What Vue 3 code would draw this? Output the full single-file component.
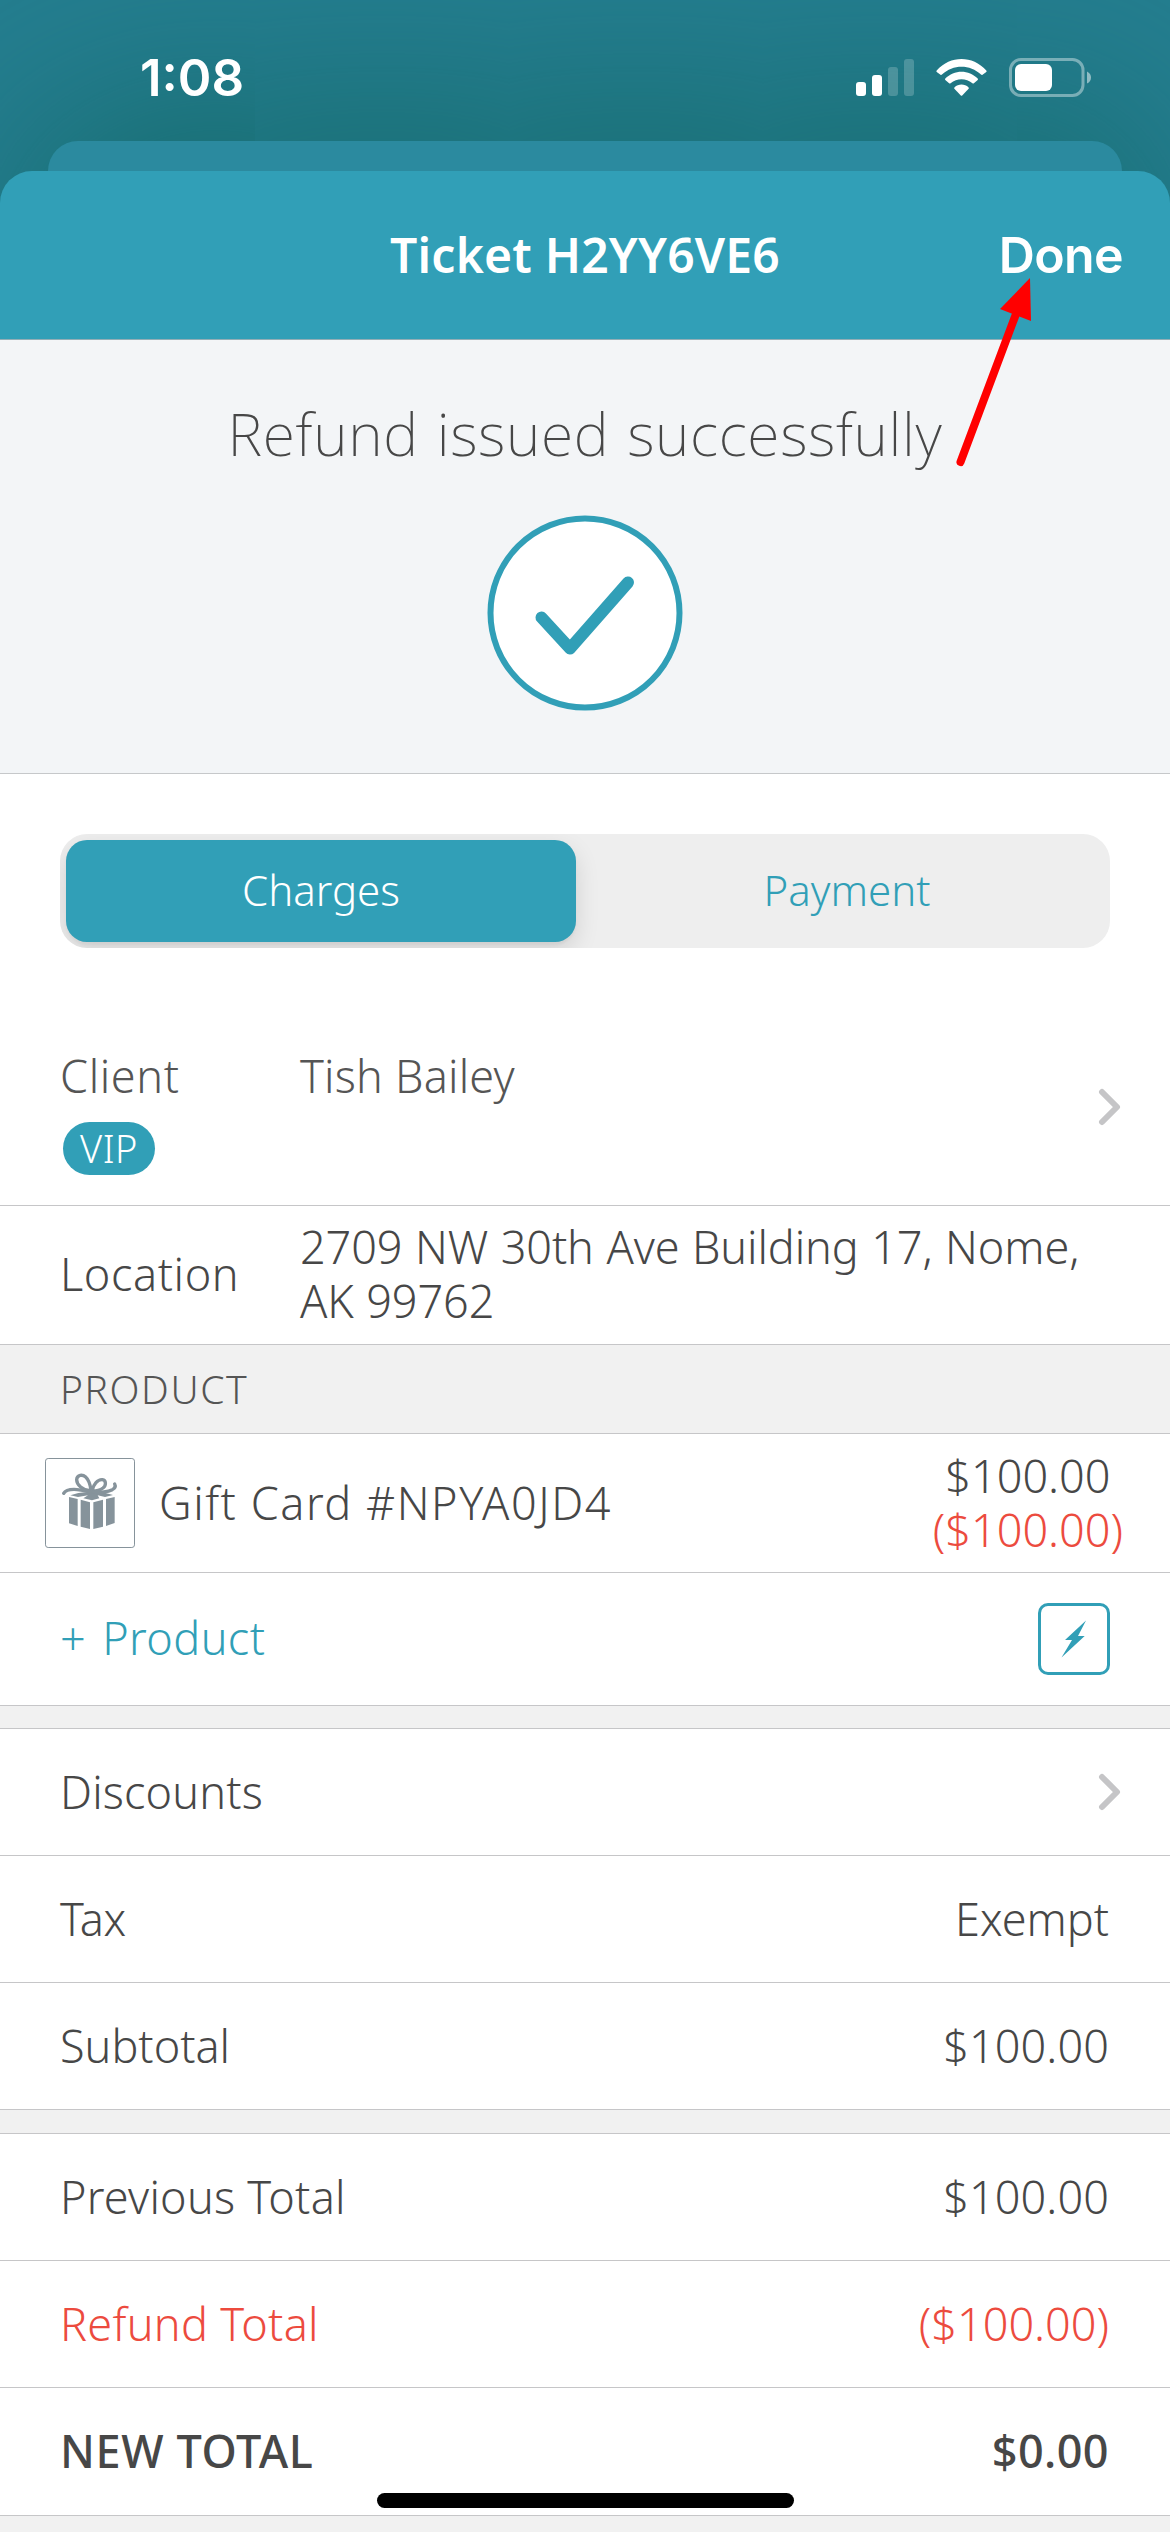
<script setup>
const summary = [
  { label: 'Discounts', ls: 0.15, chevron: true },
  { label: 'Tax', ls: -0.5, value: 'Exempt', vls: 0 },
  { label: 'Subtotal', ls: 0, value: '$100.00', vls: 0.1 },
]
const totals = [
  { label: 'Previous Total', ls: 0.25, value: '$100.00', vls: 0.1 },
  { label: 'Refund Total', ls: 0.3, value: '($100.00)', vls: 0, tone: 'red' },
  { label: 'NEW TOTAL', ls: 0.6, value: '$0.00', vls: 0.4, tone: 'strong' },
]
</script>

<template>
  <div class="screen">
    <div class="top">
      <div class="status">
        <span class="time">1:08</span>
        <svg class="indicators" width="240" height="44" viewBox="852 56 240 44">
          <g fill="#fff">
            <rect x="856" y="82" width="10" height="14" rx="3" />
            <rect x="872" y="75" width="10" height="21" rx="3" />
            <rect x="888" y="67" width="10" height="29" rx="3" opacity=".2" />
            <rect x="904" y="59" width="10" height="37" rx="3" opacity=".2" />
            <path d="M936.700 70.500C950.500 55.200 972.500 55.200 986.300 70.500Q987 71.300 986.300 72L982.500 74.800Q981.800 75.300 981 74.600C970 64.200 953 64.200 942 74.600Q941.200 75.300 940.500 74.800L936.700 72Q936 71.300 936.700 70.500Z" />
            <path d="M945.300 78.600C954 69.400 969 69.400 977.700 78.600Q978.300 79.300 977.700 80L973.900 83.300Q973.200 83.900 972.400 83.300C966 77.900 957 77.900 950.600 83.300Q949.800 83.900 949.100 83.300L945.300 80Q944.700 79.300 945.300 78.600Z" />
            <path d="M954.400 87.400C958.500 83.600 964.500 83.600 968.600 87.400Q969.200 88.100 968.600 88.800L962.200 95.500Q961.500 96.200 960.800 95.500L954.400 88.800Q953.800 88.100 954.400 87.400Z" />
            <rect x="1015" y="64" width="37" height="27" rx="6" />
            <path d="M1087 71.500Q1091 73.500 1091 77.500T1087 83.500Z" opacity=".5" />
          </g>
          <rect x="1010.500" y="59.500" width="72.500" height="36" rx="10.500" fill="none" stroke="#fff" stroke-width="3" opacity=".4" />
        </svg>
      </div>
      <div class="back-card"></div>
      <header class="header">
        <span></span>
        <h1>Ticket H2YY6VE6</h1>
        <span class="done">Done</span>
      </header>
    </div>

    <section class="result">
      <p>Refund issued successfully</p>
      <svg width="196" height="196" viewBox="0 0 196 196" fill="none" stroke="#319fb7">
        <circle cx="98" cy="98" r="94.500" stroke-width="6" fill="#fff" />
        <path d="M54.500 102.500 83 133.500 141 67.500" stroke-width="12" stroke-linecap="round" stroke-linejoin="round" />
      </svg>
    </section>

    <div class="tabs">
      <div class="segmented">
        <span class="tab active">Charges</span>
        <span class="tab pay">Payment</span>
      </div>
    </div>

    <div class="row client">
      <div class="label-col">
        <span class="name-label">Client</span>
        <span class="vip">VIP</span>
      </div>
      <span class="client-name">Tish Bailey</span>
      <svg class="chevron" width="24" height="38" viewBox="0 0 24 38"><path d="M4 4 19 19 4 34" /></svg>
    </div>

    <div class="row location">
      <span class="label-col loc-label">Location</span>
      <span class="address">2709 NW 30th Ave Building 17, Nome,<br />AK 99762</span>
    </div>

    <div class="section-title">PRODUCT</div>

    <div class="row item">
      <svg width="90" height="90" viewBox="45 57 270 270">
        <rect x="46.500" y="58.500" width="267" height="267" rx="8" fill="#fff" stroke="#86939b" stroke-width="3" />
        <g fill="#86939b">
          <path d="M117 174 143 180V261L117 253Z" />
          <path d="M152 182 180 190V270L152 263Z" />
          <path d="M190 190 219 182V263L190 270Z" />
          <path d="M228 180 254 174V252L228 261Z" />
          <path d="M121 169 145 162 178 158 224 161 249 168 225 174 203 169 208 178 186 184 160 178 174 169 144 174Z" />
        </g>
        <g fill="none" stroke="#86939b" stroke-width="10" stroke-linecap="round">
          <path d="M181 155C158 154 140 137 140 122 141 106 158 106 167 114 177 123 181 139 183 153" />
          <path d="M187 154C190 136 203 121 217 122 229 124 229 139 219 147 211 153 199 156 187 156" />
          <path d="M183 159C161 154 145 151 132 151 116 151 106 154 101 163" />
          <path d="M189 158C210 162 235 158 247 152 256 147 257 141 254 135" />
        </g>
      </svg>
      <span class="item-name">Gift Card #NPYA0JD4</span>
      <span class="amounts">$100.00<em>($100.00)</em></span>
    </div>

    <div class="row add">
      <span class="add-label">+ Product</span>
      <svg width="72" height="72" viewBox="0 0 72 72">
        <rect x="1.500" y="1.500" width="69" height="69" rx="8.500" fill="#fff" stroke="#319fb7" stroke-width="3" />
        <path d="M48 17.500 27 37H34L23.500 54.500 46.700 33H40Z" fill="#319fb7" />
      </svg>
    </div>

    <div class="spacer"></div>
    <div v-for="r in summary" :key="r.label" class="row line">
      <span :style="{ letterSpacing: r.ls + 'px' }">{{ r.label }}</span>
      <svg v-if="r.chevron" class="chevron" width="24" height="38" viewBox="0 0 24 38"><path d="M4 4 19 19 4 34" /></svg>
      <span v-else :style="{ letterSpacing: r.vls + 'px' }">{{ r.value }}</span>
    </div>

    <div class="spacer wide"></div>
    <div v-for="r in totals" :key="r.label" class="row line" :class="r.tone">
      <span :style="{ letterSpacing: r.ls + 'px' }">{{ r.label }}</span>
      <span :style="{ letterSpacing: r.vls + 'px' }">{{ r.value }}</span>
    </div>

    <svg class="arrow" width="90" height="200" viewBox="950 270 90 200">
      <path d="M960.500 462 1016 314" stroke="#f00" stroke-width="8" stroke-linecap="round" />
      <path d="M1030 278 1031 321 1000 309Z" fill="#f00" />
    </svg>
    <div class="home"></div>
  </div>
</template>

<style>
body {
  background: #f1f1f1;
}
</style>

<style scoped>
.screen {
  position: relative;
  width: 1170px;
  height: 2532px;
  overflow: hidden;
  background: #f1f1f1;
  color: #474747;
  font: 320 45px/54px "Noto Sans", "Open Sans", sans-serif;
}
.top {
  height: 340px;
  overflow: hidden;
  background: #257e90;
}
.status {
  position: relative;
  z-index: 1;
  display: flex;
  justify-content: space-between;
  height: 141px;
  padding: 56px 78px 0 140px;
  box-sizing: border-box;
  color: #fff;
}
.time {
  font: 600 51px/44px Inter, sans-serif;
}
.back-card {
  height: 300px;
  margin: 0 48px -270px;
  border-radius: 30px;
  background: #2b8a9f;
  box-shadow: 0 0 220px #116561;
}
.header {
  position: relative;
  display: grid;
  grid-template-columns: 1fr auto 1fr;
  align-items: center;
  height: 169px;
  padding: 0 47px;
  box-sizing: border-box;
  border-radius: 32px 32px 0 0;
  border-bottom: 1px solid #93aeb6;
  background: #319fb7;
  color: #fff;
}
h1 {
  margin: 0;
  font-size: 48px;
  font-weight: 640;
  letter-spacing: 0.2px;
}
.done {
  justify-self: end;
  font: 600 50px/54px Inter, sans-serif;
  letter-spacing: -0.6px;
}
.result {
  display: flex;
  flex-direction: column;
  align-items: center;
  height: 434px;
  padding-top: 53px;
  box-sizing: border-box;
  border-bottom: 1px solid #c6c8ca;
  background: #f3f5f7;
}
.result p {
  margin: 0 0 42px;
  font-size: 59px;
  font-weight: 230;
  line-height: 80px;
  letter-spacing: 0.65px;
  word-spacing: 2px;
}
.tabs {
  padding: 60px 60px 61px;
  background: #fff;
}
.segmented {
  display: flex;
  height: 114px;
  box-sizing: border-box;
  padding: 6px;
  border-radius: 27px;
  overflow: hidden;
  background: #eee;
  font-size: 42px;
}
.tab {
  display: flex;
  align-items: center;
  justify-content: center;
  box-sizing: border-box;
  padding-bottom: 3px;
}
.active {
  width: 510px;
  border-radius: 21px;
  background: #319fb7;
  box-shadow: 0 9px 24px rgba(0, 0, 0, 0.12), 0 3px 3px rgba(0, 0, 0, 0.04);
  color: #fff;
}
.pay {
  flex: 1;
  padding-left: 14px;
  color: #319fb7;
}
.row {
  display: flex;
  align-items: center;
  justify-content: space-between;
  box-sizing: border-box;
  padding: 0 61px 0 60px;
  border-bottom: 1px solid #c6c6c8;
  background: #fff;
}
.chevron {
  margin-right: -13px;
  fill: none;
  stroke: #c5c5c7;
  stroke-width: 6px;
  stroke-linecap: round;
  stroke-linejoin: round;
}
.label-col {
  width: 240px;
}
.client {
  height: 197px;
  color: #555;
}
.client .label-col {
  display: flex;
  flex-direction: column;
  align-items: flex-start;
  align-self: flex-start;
  padding-top: 40px;
}
.name-label {
  letter-spacing: 0.6px;
}
.vip {
  display: flex;
  align-items: center;
  justify-content: center;
  width: 92px;
  height: 53px;
  margin: 19px 0 0 3px;
  padding-bottom: 1px;
  box-sizing: border-box;
  border-radius: 27px;
  background: #319fb7;
  color: #fff;
  font-size: 38px;
  letter-spacing: 0.5px;
}
.client-name {
  flex: 1;
  align-self: flex-start;
  padding-top: 40px;
  letter-spacing: 0.2px;
}
.location {
  height: 139px;
  padding-bottom: 2px;
}
.loc-label {
  letter-spacing: 0.6px;
}
.address {
  flex: 1;
  white-space: nowrap;
  letter-spacing: -0.1px;
  word-spacing: 1px;
}
.section-title {
  display: flex;
  align-items: center;
  height: 89px;
  padding-left: 60px;
  box-sizing: border-box;
  border-bottom: 1px solid #c6c6c8;
  color: #555;
  font-size: 39px;
  letter-spacing: 1.6px;
}
.item {
  height: 139px;
  padding: 0 47px 0 45px;
}
.item-name {
  flex: 1;
  padding: 0 0 1px 24px;
  letter-spacing: 1.55px;
}
.amounts {
  padding-bottom: 1px;
  text-align: center;
}
em {
  display: block;
  color: #ec4b3e;
  font-style: normal;
}
.add {
  height: 133px;
  padding-right: 60px;
}
.add-label {
  padding-bottom: 2px;
  color: #319fb7;
  letter-spacing: 0.4px;
  word-spacing: 4px;
}
.spacer {
  height: 23px;
  box-sizing: border-box;
  border-bottom: 1px solid #c6c6c8;
}
.wide {
  height: 24px;
}
.line {
  height: 127px;
}
.line span {
  padding-bottom: 1px;
}
.red {
  color: #ec4b3e;
}
.strong {
  height: 128px;
  font-weight: 530;
}
.arrow {
  position: absolute;
  z-index: 2;
  left: 950px;
  top: 270px;
}
.home {
  position: absolute;
  left: 377px;
  top: 2493px;
  width: 417px;
  height: 15px;
  border-radius: 8px;
  background: #000;
}
</style>
